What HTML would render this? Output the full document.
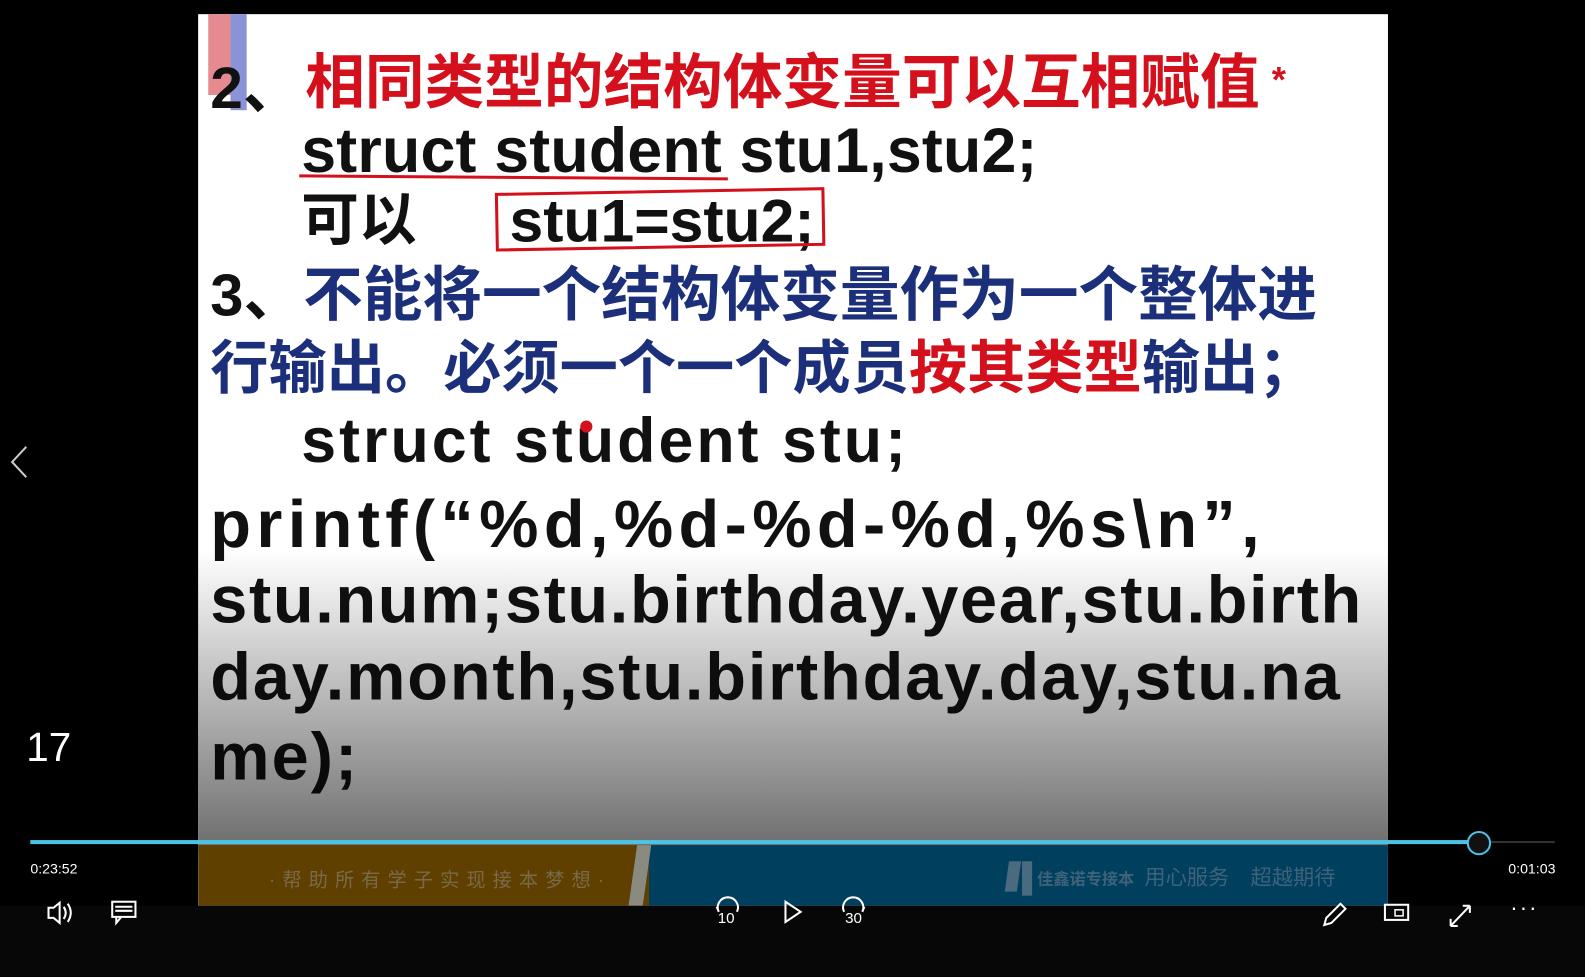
<!DOCTYPE html>
<html><head><meta charset="utf-8"><style>
body{margin:0;width:1585px;height:960px;background:#000;overflow:hidden;font-family:"Liberation Sans","Noto Sans CJK SC",sans-serif}
#w{position:absolute;left:0;top:0;width:1568px;height:950px;transform:scale(1.0109);transform-origin:0 0}
.slide{position:absolute;left:196px;top:14px;width:1177px;height:882px;background:#fff;overflow:hidden}
.t{position:absolute;white-space:nowrap;font-weight:bold;font-family:"Liberation Sans","Noto Sans CJK SC",sans-serif}
.red{color:#d4101c}.blue{color:#1c2f7a}.blk{color:#111}
.ov{position:absolute;left:0;top:530px;width:1177px;height:300px;background:linear-gradient(to bottom,rgba(0,0,0,0),rgba(0,0,0,0.58))}
.ban1{position:absolute;left:0;top:822px;width:450px;height:60px;background:#5f4000}
.ban2{position:absolute;left:446px;top:822px;width:731px;height:60px;background:#003f5e}
.bar{position:absolute;left:0;top:896px;width:1585px;height:70px;background:#070707}
.ctl{position:absolute;color:#fff;font-size:14px}
</style></head><body><div id="w">
<div class="slide">
 <div style="position:absolute;left:10px;top:0;width:22px;height:80px;background:#e58a8f"></div>
 <div style="position:absolute;left:32px;top:0;width:16px;height:95px;background:#8b93d8"></div>
 <div class="t blk" style="left:12px;top:26px;font-size:58px">2、</div>
 <div class="t red" style="left:106px;top:20px;font-size:59px">相同类型的结构体变量可以互相赋值</div>
 <div class="t red" style="left:1062px;top:44px;font-size:36px">*</div>
 <div class="t blk" style="left:102px;top:100px;font-size:62px;letter-spacing:0.2px">struct student stu1,stu2;</div>
 <div style="position:absolute;left:100px;top:160px;width:424px;height:3px;background:#d4101c;transform:rotate(0.4deg)"></div>
 <div class="t blk" style="left:102px;top:158px;font-size:57px">可以</div>
 <div class="t blk" style="left:308px;top:170px;font-size:60px">stu1=stu2;</div>
 <div style="position:absolute;left:294px;top:174px;width:320px;height:52px;border:3px solid #d4101c;transform:rotate(-1deg)"></div>
 <div class="t blk" style="left:12px;top:230px;font-size:59px">3、<span class="blue">不能将一个结构体变量作为一个整体进</span></div>
 <div class="t blue" style="left:12px;top:303px;font-size:57.6px">行输出。必须一个一个成员<span class="red">按其类型</span>输出；</div>
 <div class="t blk" style="left:102px;top:387px;font-size:62px;letter-spacing:3px">struct student stu;</div>
 <div style="position:absolute;left:378px;top:402px;width:12px;height:12px;border-radius:50%;background:#d4101c"></div>
 <div class="t blk" style="left:12px;top:466px;font-size:66px;letter-spacing:5.3px">printf(“%d,%d-%d-%d,%s\n”,</div>
 <div class="t blk" style="left:12px;top:541px;font-size:66px;letter-spacing:1.6px">stu.num;stu.birthday.year,stu.birth</div>
 <div class="t blk" style="left:12px;top:617px;font-size:66px;letter-spacing:1.8px">day.month,stu.birthday.day,stu.na</div>
 <div class="t blk" style="left:12px;top:696px;font-size:66px;letter-spacing:2px">me);</div>
 <div class="ov"></div>
 <div class="ban1"></div><div class="ban2"></div>
 <div style="position:absolute;left:430px;top:822px;width:14px;height:60px;background:#8a8a80;transform:skewX(-8deg)"></div>
 <div class="t" style="left:70px;top:842px;font-size:19px;color:#7a6a4a;font-weight:normal;letter-spacing:7px">·帮助所有学子实现接本梦想·</div>
 <div style="position:absolute;left:800px;top:838px;width:12px;height:30px;background:#4a6a7e;transform:skewX(-8deg)"></div>
 <div style="position:absolute;left:815px;top:838px;width:10px;height:34px;background:#4a6a7e"></div>
 <div class="t" style="left:830px;top:842px;font-size:16px;color:#3d6279;font-weight:bold">佳鑫诺专接本</div>
 <div class="t" style="left:936px;top:838px;font-size:21px;color:#3d6279;font-weight:normal">用心服务　超越期待</div>
</div>
<div class="bar"></div>
<div style="position:absolute;left:30px;top:831px;width:1432px;height:4px;background:#4cc2e4"></div>
<div style="position:absolute;left:1462px;top:832px;width:76px;height:2px;background:#333"></div>
<div style="position:absolute;left:1451px;top:822px;width:20px;height:20px;border:2px solid #4cc2e4;border-radius:50%;background:#111"></div>
<div class="ctl" style="left:30px;top:851px">0:23:52</div>
<div class="ctl" style="left:1492px;top:851px">0:01:03</div>
<div class="ctl" style="left:26px;top:718px;font-size:40px">17</div>
<svg style="position:absolute;left:8px;top:440px" width="22" height="34"><path d="M18 2 L4 17 L18 32" stroke="#ccc" stroke-width="2" fill="none"/></svg>
<svg style="position:absolute;left:0;top:885px" width="1585" height="40" fill="none" stroke="#fff" stroke-width="2">
<path d="M48 13h5l6-5v20l-6-5h-5z"/><path d="M63 12q4 6 0 12M67 9q6 9 0 18"/>
<rect x="111" y="7" width="23" height="15"/><path d="M115 22v6l5-6M114 12h17M114 16h17"/>
<path d="M711 17a10 10 0 1 1 18 0M711 17l-2-5"/>
<text x="710" y="28" fill="#fff" stroke="none" font-size="15" font-family="Liberation Sans">10</text>
<path d="M777 7l15 10-15 10z"/>
<path d="M835 17a10 10 0 1 1 18 0M853 17l2-5"/>
<text x="836" y="28" fill="#fff" stroke="none" font-size="15" font-family="Liberation Sans">30</text>
<path d="M1310 30l2-7 14-14 5 5-14 14z"/>
<rect x="1370" y="10" width="23" height="15"/><rect x="1380" y="15" width="8" height="6" stroke-width="1.5"/>
<path d="M1435 31l19-20M1435 31v-7M1435 31h7M1454 11h-7M1454 11v7"/>
</svg>
<div class="ctl" style="left:1494px;top:885px;font-size:22px;letter-spacing:2px">···</div>
</div></body></html>
